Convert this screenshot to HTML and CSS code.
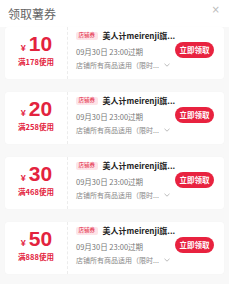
FILE: index.html
```html
<!DOCTYPE html>
<html>
<head>
<meta charset="utf-8">
<link rel="stylesheet" href="styles.css">
</head>
<body>
<div class="page">
  <div class="header">
    <span class="title">领取薯券</span>
    <span class="close">×</span>
  </div>
  <div class="list">
    <div class="card">
      <div class="left">
        <div class="price"><span class="yen">¥</span><span class="num">10</span></div>
        <div class="cond">满178使用</div>
      </div>
      <div class="right">
        <div class="info">
          <div class="line1"><span class="tag">店铺券</span><span class="shop">美人计meirenji旗...</span></div>
          <div class="date">09月30日 23:00过期</div>
          <div class="scope"><span>店铺所有商品适用（限时...</span><svg class="chev" width="6" height="4" viewBox="0 0 6 4"><path d="M0.5 0.8 L3 3.2 L5.5 0.8" fill="none" stroke="#aaa" stroke-width="0.8"/></svg></div>
        </div>
        <div class="btn">立即领取</div>
      </div>
    </div>
    <div class="card">
      <div class="left">
        <div class="price"><span class="yen">¥</span><span class="num">20</span></div>
        <div class="cond">满258使用</div>
      </div>
      <div class="right">
        <div class="info">
          <div class="line1"><span class="tag">店铺券</span><span class="shop">美人计meirenji旗...</span></div>
          <div class="date">09月30日 23:00过期</div>
          <div class="scope"><span>店铺所有商品适用（限时...</span><svg class="chev" width="6" height="4" viewBox="0 0 6 4"><path d="M0.5 0.8 L3 3.2 L5.5 0.8" fill="none" stroke="#aaa" stroke-width="0.8"/></svg></div>
        </div>
        <div class="btn">立即领取</div>
      </div>
    </div>
    <div class="card">
      <div class="left">
        <div class="price"><span class="yen">¥</span><span class="num">30</span></div>
        <div class="cond">满468使用</div>
      </div>
      <div class="right">
        <div class="info">
          <div class="line1"><span class="tag">店铺券</span><span class="shop">美人计meirenji旗...</span></div>
          <div class="date">09月30日 23:00过期</div>
          <div class="scope"><span>店铺所有商品适用（限时...</span><svg class="chev" width="6" height="4" viewBox="0 0 6 4"><path d="M0.5 0.8 L3 3.2 L5.5 0.8" fill="none" stroke="#aaa" stroke-width="0.8"/></svg></div>
        </div>
        <div class="btn">立即领取</div>
      </div>
    </div>
    <div class="card">
      <div class="left">
        <div class="price"><span class="yen">¥</span><span class="num">50</span></div>
        <div class="cond">满888使用</div>
      </div>
      <div class="right">
        <div class="info">
          <div class="line1"><span class="tag">店铺券</span><span class="shop">美人计meirenji旗...</span></div>
          <div class="date">09月30日 23:00过期</div>
          <div class="scope"><span>店铺所有商品适用（限时...</span><svg class="chev" width="6" height="4" viewBox="0 0 6 4"><path d="M0.5 0.8 L3 3.2 L5.5 0.8" fill="none" stroke="#aaa" stroke-width="0.8"/></svg></div>
        </div>
        <div class="btn">立即领取</div>
      </div>
    </div>
  </div>
</div>
</body>
</html>
```
FILE: styles.css
```css
html, body {
  margin: 0;
  padding: 0;
  background: #ffffff;
}
body {
  font-family: "Noto Sans CJK SC", "Noto Sans", sans-serif;
  width: 229px;
  height: 284px;
  overflow: hidden;
}
.page {
  background: #f8f8f8;
  height: 284px;
}
.header {
  height: 27px;
  display: flex;
  align-items: flex-start;
  justify-content: space-between;
  padding: 0 9px 0 8px;
  background: #fff;
}
.title {
  font-size: 12px;
  color: #666;
  line-height: 12px;
  margin-top: 8px;
}
.close {
  font-size: 10px;
  color: #bbb;
  line-height: 10px;
  margin-top: 5px;
  font-family: "DejaVu Sans", sans-serif;
}
.list {
  display: flex;
  flex-direction: column;
  gap: 13px;
  padding: 0 5px;
}
.card {
  height: 52px;
  box-sizing: border-box;
  padding-bottom: 6px;
  display: flex;
  background: #fff;
  border-radius: 3px;
  box-shadow: 0 0 1px rgba(0,0,0,0.06);
}
.left {
  width: 62px;
  margin-bottom: -6px;
  padding-bottom: 6px;
  border-right: 1px dashed #ececec;
  display: flex;
  flex-direction: column;
  align-items: center;
  justify-content: center;
  color: #e3233e;
}
.price {
  display: flex;
  align-items: baseline;
  height: 21px;
  line-height: 21px;
  margin-left: 1px;
}
.yen {
  font-size: 9px;
  font-weight: 700;
  margin-right: 3px;
  font-family: "Liberation Sans", sans-serif;
}
.num {
  font-size: 21px;
  font-weight: 700;
  font-family: "Liberation Sans", sans-serif;
}
.cond {
  font-size: 7.5px;
  font-weight: 700;
  line-height: 10px;
  margin-top: 3px;
}
.right {
  flex: 1;
  display: flex;
  align-items: center;
  padding-left: 8px;
  padding-right: 10px;
  min-width: 0;
}
.info {
  flex: 1;
  display: flex;
  flex-direction: column;
  min-width: 0;
}
.line1 {
  display: flex;
  align-items: center;
  height: 10px;
  white-space: nowrap;
}
.tag {
  flex-shrink: 0;
  font-size: 5.5px;
  color: #e3233e;
  background: #fde4e8;
  border-radius: 2px;
  padding: 0 2.5px;
  line-height: 7.5px;
  margin-right: 5px;
  white-space: nowrap;
}
.shop {
  font-size: 8px;
  font-weight: 700;
  color: #222;
  line-height: 10px;
  white-space: nowrap;
}
.date {
  font-size: 7.5px;
  color: #777;
  line-height: 8px;
  margin-top: 7px;
  white-space: nowrap;
}
.scope {
  font-size: 7px;
  color: #888;
  line-height: 8px;
  margin-top: 5px;
  display: flex;
  align-items: center;
  white-space: nowrap;
}
.chev {
  margin-left: 5px;
  flex-shrink: 0;
}
.btn {
  flex-shrink: 0;
  background: #e8223f;
  color: #fff;
  font-size: 7.5px;
  font-weight: 700;
  height: 16px;
  line-height: 16px;
  padding: 0 4.5px;
  border-radius: 8px;
  white-space: nowrap;
}
```
